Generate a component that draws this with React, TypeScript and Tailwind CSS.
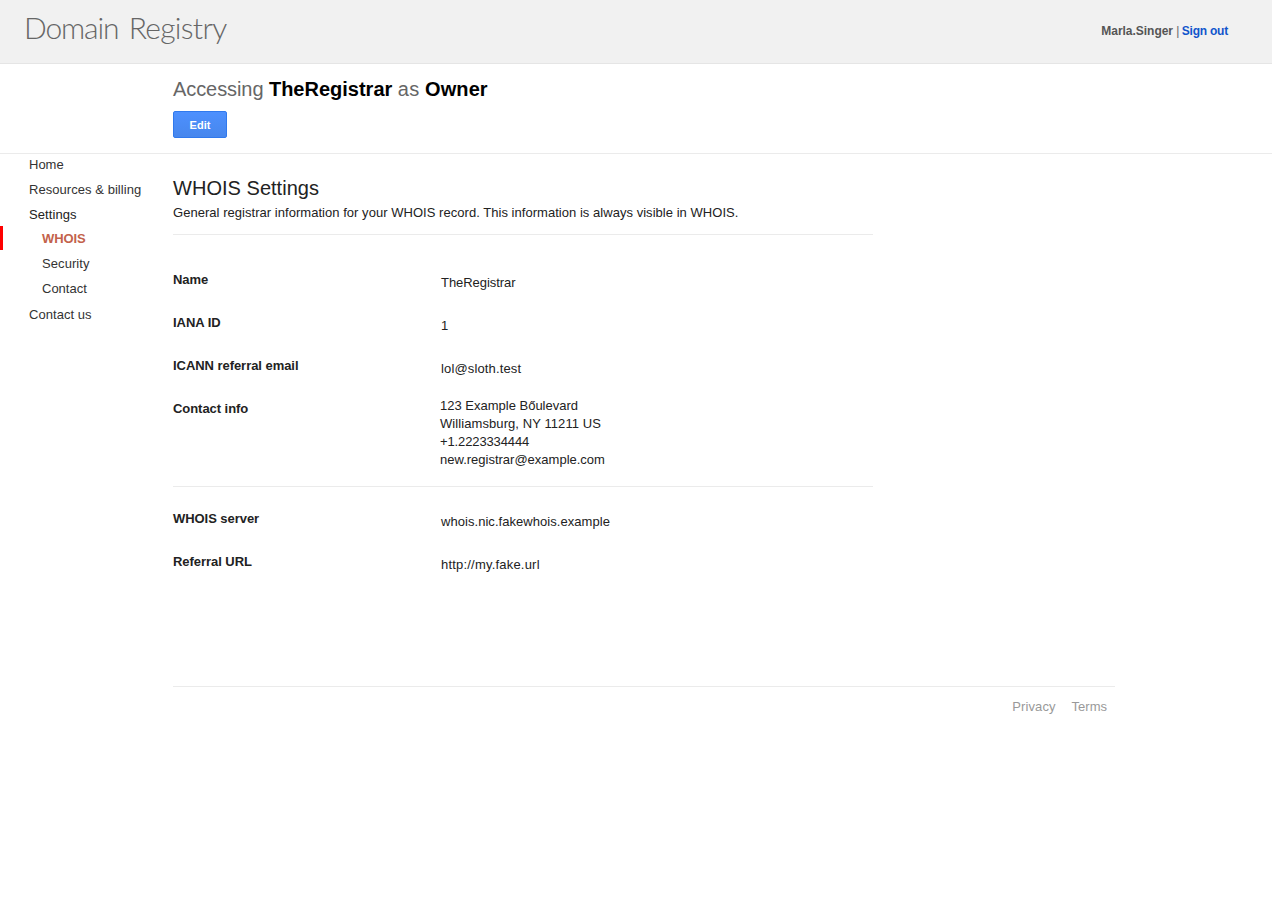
import React from 'react';

type Row = { label: string; value: string; tracking?: string };

const general: Row[] = [
  { label: 'Name', value: 'TheRegistrar', tracking: 'tracking-[-0.06px]' },
  { label: 'IANA ID', value: '1' },
  { label: 'ICANN referral email', value: 'lol@sloth.test', tracking: 'tracking-[0.14px]' },
];

const services: Row[] = [
  { label: 'WHOIS server', value: 'whois.nic.fakewhois.example', tracking: 'tracking-[0.05px]' },
  { label: 'Referral URL', value: 'http://my.fake.url', tracking: 'tracking-[0.2px]' },
];

function Field({ label, value, tracking }: Row) {
  return (
    <div className="flex h-[43px]">
      <dt className="w-[268px] font-bold tracking-[-0.05px]">{label}</dt>
      <dd className={`pt-[3px] ${tracking ?? ''}`}>{value}</dd>
    </div>
  );
}

function Header() {
  return (
    <header className="flex h-16 justify-between border-b border-[#e5e5e5] bg-[#f1f1f1] pl-6 pr-11">
      <div className="whitespace-nowrap pt-2 font-['Lato',sans-serif] text-[30px] font-light leading-[38px] text-[#666] antialiased">
        <span className="tracking-[-1.15px]">Domain</span>
        <span className="pl-[3px] tracking-[-0.7px]"> Registry</span>
      </div>
      <div className="pt-[23px] text-xs leading-4 text-[#666]">
        <b className="tracking-[-0.03px] text-[#555]">Marla.Singer</b> |{' '}
        <a className="-ml-px font-bold tracking-[-0.22px] text-[#15c]">Sign out</a>
      </div>
    </header>
  );
}

function Sidebar() {
  return (
    <nav className="w-[173px] shrink-0 text-[#333]">
      <ul>
        <li className="h-[25px] pl-[29px] leading-[21px]">Home</li>
        <li className="h-[25px] pl-[29px] leading-[21px] tracking-[0.05px]">Resources &amp; billing</li>
        <li className="pl-[29px] leading-[21px] tracking-[0.08px] text-[#222]">Settings</li>
        <li>
          <ul className="pt-px">
            <li className="h-6 border-l-[3px] border-[#f00] pl-[39px] font-bold leading-[26px] tracking-[-0.08px] text-[#c3624b]">
              WHOIS
            </li>
            <li className="h-[25px] pl-[42px] leading-[27px] tracking-[0.08px]">Security</li>
            <li className="h-[25px] pl-[42px] leading-[27px]">Contact</li>
          </ul>
        </li>
        <li className="h-[25px] pl-[29px] leading-[29px] tracking-[0.05px]">Contact us</li>
      </ul>
    </nav>
  );
}

export default function App() {
  return (
    <div className="h-[897px] overflow-hidden bg-white font-['Liberation_Sans',Arial,sans-serif] text-[13px] leading-[18px] text-[#222]">
      <Header />
      <section className="h-[90px] border-b border-[#ebebeb] pl-[173px] pt-[13px]">
        <h1 className="text-xl leading-6 text-[#666]">
          <span className="tracking-[-0.08px]">Accessing </span>
          <b className="text-black">TheRegistrar</b> <span className="tracking-[0.15px]">as </span>
          <b className="tracking-[0.1px] text-black">Owner</b>
        </h1>
        <button className="mt-[10px] block h-[27px] w-[54px] rounded-[2px] border border-[#3079ed] bg-linear-to-b from-[#4d90fe] to-[#4787ed] text-[11px] font-bold leading-[27px] text-white">
          Edit
        </button>
      </section>
      <div className="flex">
        <Sidebar />
        <div className="w-[942px]">
          <main className="h-[532px] w-[700px] pt-[22px]">
            <h2 className="text-xl leading-6 tracking-[0.03px]">WHOIS Settings</h2>
            <p className="mt-1 tracking-[0.037px]">
              General registrar information for your WHOIS record. This information is always visible in WHOIS.
            </p>
            <hr className="mt-3 border-[#ebebeb]" />
            <dl className="pt-9">
              {general.map((row) => (
                <Field key={row.label} {...row} />
              ))}
              <div className="flex h-[86px]">
                <dt className="w-[267px] font-bold tracking-[-0.05px]">Contact info</dt>
                <dd className="-mt-[3px]">
                  123 Example Bőulevard
                  <br />
                  <span className="tracking-[0.08px]">Williamsburg, NY 11211 US</span>
                  <br />
                  <span className="tracking-[-0.12px]">+1.2223334444</span>
                  <br />
                  new.registrar@example.com
                </dd>
              </div>
            </dl>
            <hr className="border-[#ebebeb]" />
            <dl className="pt-[23px]">
              {services.map((row) => (
                <Field key={row.label} {...row} />
              ))}
            </dl>
          </main>
          <footer className="flex justify-end gap-4 border-t border-[#ebebeb] pr-2 pt-[11px] text-[#999]">
            <a className="tracking-[0.1px]">Privacy</a>
            <a>Terms</a>
          </footer>
        </div>
      </div>
    </div>
  );
}
